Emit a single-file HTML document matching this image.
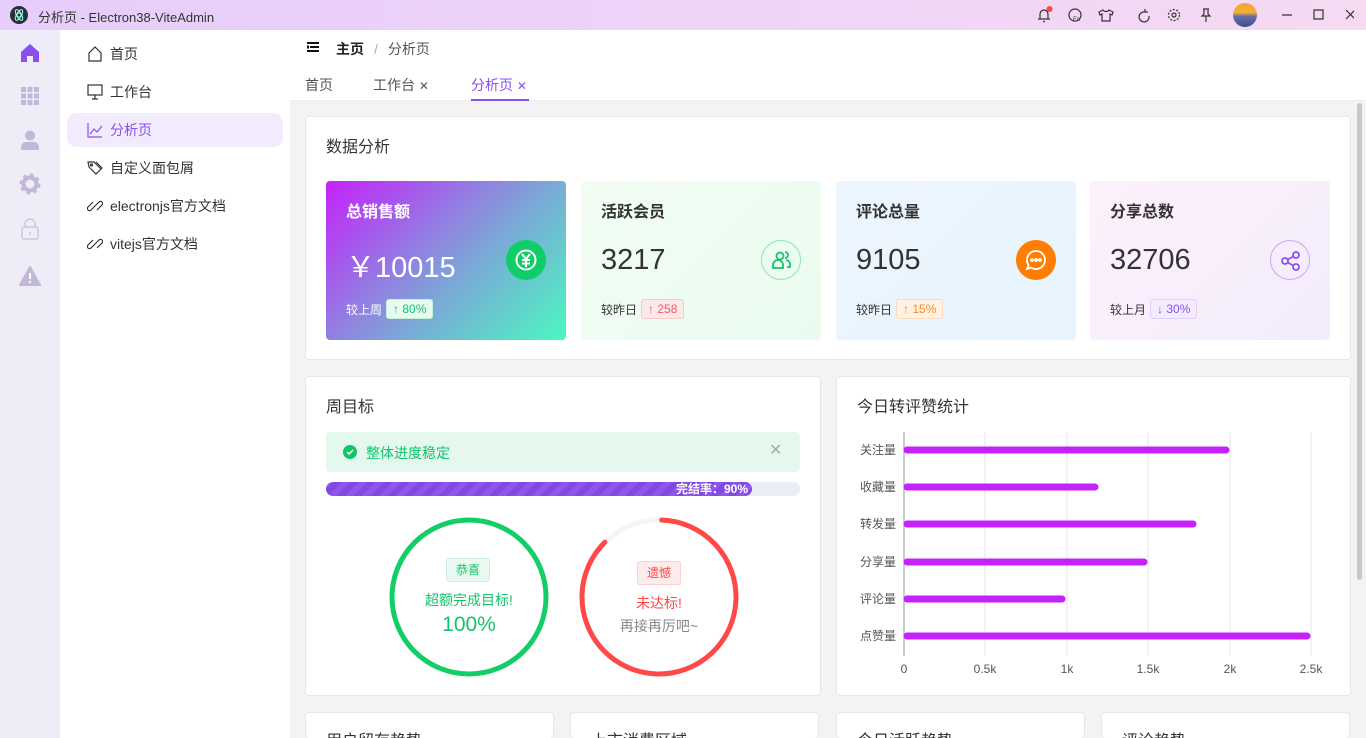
<!DOCTYPE html>
<html style="height:738px;overflow:hidden"><head><meta charset="utf-8"><style>
*{box-sizing:border-box;margin:0;padding:0}
body{width:1366px;height:738px;overflow:hidden;font-family:"Liberation Sans","Noto Sans CJK SC",sans-serif;color:#333;background:#f3f3f3;position:relative}
.abs{position:absolute}
.title{left:0;top:0;width:1366px;height:30px;background:linear-gradient(90deg,#e6cdfb,#efd5f6 60%,#f5daf2)}
.rail{left:0;top:30px;width:60px;height:708px;background:#eeecf6}
.menu{left:60px;top:30px;width:230px;height:708px;background:#fff}
.mi{position:absolute;left:7px;width:216px;height:34px;border-radius:10px;font-size:14px;line-height:34px;padding-left:43px;color:#333}
.mi svg{position:absolute;left:20px;top:9px}
.card{position:absolute;background:#fff;border:1px solid #e6e6ee;border-radius:4px;overflow:hidden}
.h{font-size:16px;color:#333;position:absolute;line-height:18px}
.stat{position:absolute;top:181px;width:240px;height:159px;border-radius:4px}
.stat .t{position:absolute;left:20px;top:17px;font-size:16px;font-weight:bold}
.stat .n{position:absolute;left:20px;top:63px;font-size:29px}
.stat .c{position:absolute;left:20px;top:118px;font-size:12px;display:flex;align-items:center;gap:4px}
.tag{display:inline-block;height:20px;line-height:18px;padding:0 6px;border-radius:3px;border:1px solid;font-size:12px}
.ic{position:absolute;left:180px;top:59px;width:40px;height:40px;border-radius:50%}
</style></head><body>
<div class="abs title">
 <div class="abs" style="left:10px;top:6px;width:18px;height:18px;border-radius:50%;background:#2b2e3b"><svg width="18" height="18"><circle cx="9" cy="9" r="2" fill="none" stroke="#9fe" stroke-width="1"/><ellipse cx="9" cy="9" rx="6" ry="2.5" fill="none" stroke="#9fe" stroke-width="1" transform="rotate(60 9 9)"/><ellipse cx="9" cy="9" rx="6" ry="2.5" fill="none" stroke="#9fe" stroke-width="1" transform="rotate(-60 9 9)"/></svg></div>
 <div class="abs" style="left:38px;top:7px;font-size:13px;color:#333">分析页 - Electron38-ViteAdmin</div>
 <svg class="abs" style="left:1034px;top:6px" width="320" height="20" fill="none" stroke="#333" stroke-width="1.2">
  <path d="M4 13h12M6 13V8a4 4 0 018 0v5M9 15.5h2"/><circle cx="15.5" cy="3" r="3" fill="#f44" stroke="none"/>
  <circle cx="41" cy="9" r="6"/><text x="39" y="15" font-size="6" fill="#333" stroke="none">En</text>
  <path d="M69 4l-4 2 1 3 2-1v7h8V8l2 1 1-3-4-2c-1 2-5 2-6 0z"/>
  <path d="M111 6a5 5 0 104 4M111 3v3h3"/>
  <circle cx="140" cy="9" r="2"/><circle cx="140" cy="9" r="5.5" stroke-dasharray="2 1.5"/>
  <path d="M169 3h6M170 3v5l-2 2h8l-2-2V3M172 10v6"/>
  <path d="M248 9h10M280 4h9v9h-9zM312 4l9 9M321 4l-9 9"/>
 </svg>
 <div class="abs" style="left:1233px;top:3px;width:24px;height:24px;border-radius:50%;background:linear-gradient(180deg,#f0a040 0%,#f7b030 40%,#6a6ea8 55%,#3a4f8a 100%)"></div>
</div>
<div class="abs rail">
 <svg class="abs" style="left:20px;top:13px" width="20" height="20"><path d="M10 1L1 9v10h6v-6h6v6h6V9z" fill="#8b4ff0"/></svg>
 <svg class="abs" style="left:20px;top:56px" width="20" height="20" fill="#c2b6d9"><rect x="1" y="1" width="5" height="5"/><rect x="7.5" y="1" width="5" height="5"/><rect x="14" y="1" width="5" height="5"/><rect x="1" y="7.5" width="5" height="5"/><rect x="7.5" y="7.5" width="5" height="5"/><rect x="14" y="7.5" width="5" height="5"/><rect x="1" y="14" width="5" height="5"/><rect x="7.5" y="14" width="5" height="5"/><rect x="14" y="14" width="5" height="5"/></svg>
 <svg class="abs" style="left:20px;top:100px" width="20" height="20" fill="#c2b6d9"><circle cx="10" cy="5.5" r="5"/><path d="M1 20v-3a5 5 0 015-5h8a5 5 0 015 5v3z"/></svg>
 <svg class="abs" style="left:19px;top:143px" width="22" height="22"><circle cx="11" cy="11" r="6.5" fill="none" stroke="#c2b6d9" stroke-width="4"/><circle cx="11" cy="11" r="9" fill="none" stroke="#c2b6d9" stroke-width="3" stroke-dasharray="3.5 3.5"/></svg>
 <svg class="abs" style="left:20px;top:188px" width="20" height="22" fill="none" stroke="#cfc5e2" stroke-width="1.5"><rect x="2" y="9" width="16" height="12" rx="2"/><path d="M5 9V6a5 5 0 0110 0v3M10 14v3"/></svg>
 <svg class="abs" style="left:19px;top:236px" width="22" height="20"><path d="M11 1L21 19H1z" fill="#c2b6d9" stroke="#c2b6d9" stroke-linejoin="round" stroke-width="2"/><path d="M11 7v6" stroke="#fff" stroke-width="2"/><circle cx="11" cy="16" r="1.2" fill="#fff"/></svg>
</div>
<div class="abs menu">
 <div class="mi" style="top:7px"><svg width="16" height="16" fill="none" stroke="#333" stroke-width="1.2"><path d="M2 7l6-6 6 6v8H2z"/></svg>首页</div>
 <div class="mi" style="top:45px"><svg width="16" height="16" fill="none" stroke="#333" stroke-width="1.2"><rect x="1" y="1" width="14" height="10"/><path d="M8 11v4M5 15h6"/></svg>工作台</div>
 <div class="mi" style="top:83px;background:#f1ebfd;color:#8b4ff0"><svg width="16" height="16" fill="none" stroke="#8b4ff0" stroke-width="1.2"><path d="M1 1v14h14M3 12l4-5 3 3 5-6"/></svg>分析页</div>
 <div class="mi" style="top:121px"><svg width="16" height="16" fill="none" stroke="#333" stroke-width="1.2"><path d="M1 2h6l7 7-5 5-7-7zM9 2l6 6-1 1"/><circle cx="4.5" cy="5" r="1"/></svg>自定义面包屑</div>
 <div class="mi" style="top:159px"><svg width="16" height="16" fill="none" stroke="#333" stroke-width="1.2"><path d="M7 9l5-5a2 2 0 013 3l-5 5M9 7L4 12a2 2 0 01-3-3l5-5"/></svg>electronjs官方文档</div>
 <div class="mi" style="top:197px"><svg width="16" height="16" fill="none" stroke="#333" stroke-width="1.2"><path d="M7 9l5-5a2 2 0 013 3l-5 5M9 7L4 12a2 2 0 01-3-3l5-5"/></svg>vitejs官方文档</div>
</div>
<div class="abs" style="left:290px;top:30px;width:1076px;height:71px;background:#fff;border-bottom:1px solid #eee">
 <svg class="abs" style="left:17px;top:12px" width="12" height="10" fill="#111"><rect y="0" width="12" height="2"/><rect x="3" y="4" width="9" height="2"/><rect y="8" width="12" height="2"/><rect y="3.5" width="2" height="3"/></svg>
 <div class="abs" style="left:46px;top:9px;font-size:14px"><b style="color:#222">主页</b><span style="color:#aaa;margin:0 10px">/</span><span style="color:#555">分析页</span></div>
 <div class="abs" style="left:15px;top:45px;font-size:14px;color:#555">首页</div>
 <div class="abs" style="left:83px;top:45px;font-size:14px;color:#555">工作台 <span style="font-size:12px">✕</span></div>
 <div class="abs" style="left:181px;top:45px;font-size:14px;color:#8b4ff0">分析页 <span style="font-size:12px">✕</span></div>
 <div class="abs" style="left:181px;top:69px;width:58px;height:2px;background:#8b4ff0"></div>
</div>
<div class="abs" style="left:1357px;top:103px;width:5px;height:477px;border-radius:3px;background:#c8c8c8"></div>

<div class="card" style="left:305px;top:116px;width:1046px;height:244px"><div class="h" style="left:20px;top:22px">数据分析</div></div>
<div class="stat" style="left:326px;background:linear-gradient(135deg,#c521fb,#7ea3d8 55%,#4bf8c0);color:#fff">
 <div class="t">总销售额</div><div class="n">￥10015</div>
 <div class="ic" style="background:#0fce6a"><svg width="40" height="40" fill="none" stroke="#fff" stroke-width="2"><circle cx="20" cy="20" r="9.5"/><path d="M16 14l4 5 4-5M20 19v8M16 20h8M16 23.5h8"/></svg></div>
 <div class="c">较上周 <span class="tag" style="background:#e9fbf1;border-color:#c4f0d8;color:#12c46a">↑ 80%</span></div>
</div>
<div class="stat" style="left:581px;background:linear-gradient(135deg,#f2fdf4,#e9fbef)">
 <div class="t">活跃会员</div><div class="n">3217</div>
 <div class="ic" style="border:1px solid #8fe3b5"><svg width="40" height="40" fill="none" stroke="#16c46c" stroke-width="1.8"><circle cx="18" cy="15" r="3.5"/><path d="M11 27v-3a5 5 0 0110 0v3zM23 11a3 3 0 110 6M24 19a4 4 0 014 4v3h-3"/></svg></div>
 <div class="c">较昨日 <span class="tag" style="background:#fde9ea;border-color:#f9c7c9;color:#f45c5c">↑ 258</span></div>
</div>
<div class="stat" style="left:836px;background:linear-gradient(135deg,#edf6fe,#e7f3fd)">
 <div class="t">评论总量</div><div class="n">9105</div>
 <div class="ic" style="background:#ff7d00"><svg width="40" height="40" fill="none" stroke="#fff" stroke-width="1.8"><path d="M20 11a9 9 0 11-5 16.5L11 29l1.5-4A9 9 0 0120 11z"/><circle cx="16" cy="20" r="1" fill="#fff"/><circle cx="20" cy="20" r="1" fill="#fff"/><circle cx="24" cy="20" r="1" fill="#fff"/></svg></div>
 <div class="c">较昨日 <span class="tag" style="background:#fff2e5;border-color:#ffd9b5;color:#ff8a1a">↑ 15%</span></div>
</div>
<div class="stat" style="left:1090px;background:linear-gradient(135deg,#fdf0fb,#f3ecfd)">
 <div class="t">分享总数</div><div class="n">32706</div>
 <div class="ic" style="border:1px solid #c8a8f5"><svg width="40" height="40" fill="none" stroke="#8b4ff0" stroke-width="1.8"><circle cx="14" cy="20" r="3"/><circle cx="25" cy="14" r="3"/><circle cx="25" cy="26" r="3"/><path d="M16.5 18.5l6-3M16.5 21.5l6 3"/></svg></div>
 <div class="c">较上月 <span class="tag" style="background:#f3ecfe;border-color:#ddd0fa;color:#8b4ff0">↓ 30%</span></div>
</div>

<div class="card" style="left:305px;top:376px;width:516px;height:320px">
 <div class="h" style="left:20px;top:22px">周目标</div>
 <div class="abs" style="left:20px;top:55px;width:474px;height:40px;background:#e5f8ee;border-radius:4px">
  <svg class="abs" style="left:17px;top:13px" width="14" height="14"><circle cx="7" cy="7" r="7" fill="#12c46a"/><path d="M4 7l2 2 4-4" stroke="#fff" stroke-width="1.5" fill="none"/></svg>
  <div class="abs" style="left:40px;top:11px;font-size:14px;color:#12c46a">整体进度稳定</div>
  <div class="abs" style="left:443px;top:8px;font-size:16px;color:#aaa">✕</div>
 </div>
 <div class="abs" style="left:20px;top:105px;width:474px;height:14px;border-radius:7px;background:#ebedf5">
  <div style="width:426px;height:14px;border-radius:7px;background:repeating-linear-gradient(-45deg,#8149e0 0 6px,#8e56ea 6px 12px);color:#fff;font-size:12px;font-weight:bold;text-align:right;padding-right:4px;line-height:14px">完结率：90%</div>
 </div>
 <svg class="abs" style="left:80px;top:138px" width="370" height="170">
  <circle cx="83" cy="82" r="77" fill="none" stroke="#13ce66" stroke-width="5"/>
  <circle cx="273" cy="82" r="77" fill="none" stroke="#f4f4f9" stroke-width="5"/>
  <circle cx="273" cy="82" r="77" fill="none" stroke="#ff4949" stroke-width="5" stroke-linecap="round" stroke-dasharray="421 500" transform="rotate(-88 273 82)"/>
 </svg>
 <div class="abs" style="left:140px;top:181px;width:44px;height:24px;border:1px solid #c8f2da;background:#e8faf0;border-radius:3px;color:#12c46a;font-size:12px;text-align:center;line-height:22px">恭喜</div>
 <div class="abs" style="left:103px;top:213px;width:120px;text-align:center;color:#12c46a;font-size:14px">超额完成目标!</div>
 <div class="abs" style="left:103px;top:236px;width:120px;text-align:center;color:#12c46a;font-size:21px">100%</div>
 <div class="abs" style="left:331px;top:184px;width:44px;height:24px;border:1px solid #fbd0d0;background:#feecec;border-radius:3px;color:#f44;font-size:12px;text-align:center;line-height:22px">遗憾</div>
 <div class="abs" style="left:293px;top:216px;width:120px;text-align:center;color:#f44;font-size:14px">未达标!</div>
 <div class="abs" style="left:293px;top:239px;width:120px;text-align:center;color:#888;font-size:14px">再接再厉吧~</div>
</div>

<div class="card" style="left:836px;top:376px;width:515px;height:320px">
 <div class="h" style="left:20px;top:22px">今日转评赞统计</div>
</div>
<svg class="abs" style="left:836px;top:420px" width="515" height="270" font-family="Liberation Sans,Noto Sans CJK SC,sans-serif" font-size="12" fill="#555">
 <g stroke="#e3e5ee"><path d="M149 12v224M231 12v224M312 12v224M394 12v224M475 12v224"/></g>
 <path d="M68 12v224" stroke="#999"/>
 <g stroke="#c421fb" stroke-width="7" stroke-linecap="round">
  <path d="M71 30H390M71 67H259M71 104H357M71 142H308M71 179H226M71 216H471"/>
 </g>
 <g text-anchor="end"><text x="60" y="34">关注量</text><text x="60" y="71">收藏量</text><text x="60" y="108">转发量</text><text x="60" y="146">分享量</text><text x="60" y="183">评论量</text><text x="60" y="220">点赞量</text></g>
 <g text-anchor="middle"><text x="68" y="253">0</text><text x="149" y="253">0.5k</text><text x="231" y="253">1k</text><text x="312" y="253">1.5k</text><text x="394" y="253">2k</text><text x="475" y="253">2.5k</text></g>
</svg>

<div class="card" style="left:305px;top:712px;width:249px;height:26px;border-bottom:none"><div class="h" style="left:20px;top:20px">用户留存趋势</div></div>
<div class="card" style="left:570px;top:712px;width:249px;height:26px;border-bottom:none"><div class="h" style="left:20px;top:20px">上市消费区域</div></div>
<div class="card" style="left:836px;top:712px;width:249px;height:26px;border-bottom:none"><div class="h" style="left:20px;top:20px">今日活跃趋势</div></div>
<div class="card" style="left:1101px;top:712px;width:249px;height:26px;border-bottom:none"><div class="h" style="left:20px;top:20px">评论趋势</div></div>
</body></html>
